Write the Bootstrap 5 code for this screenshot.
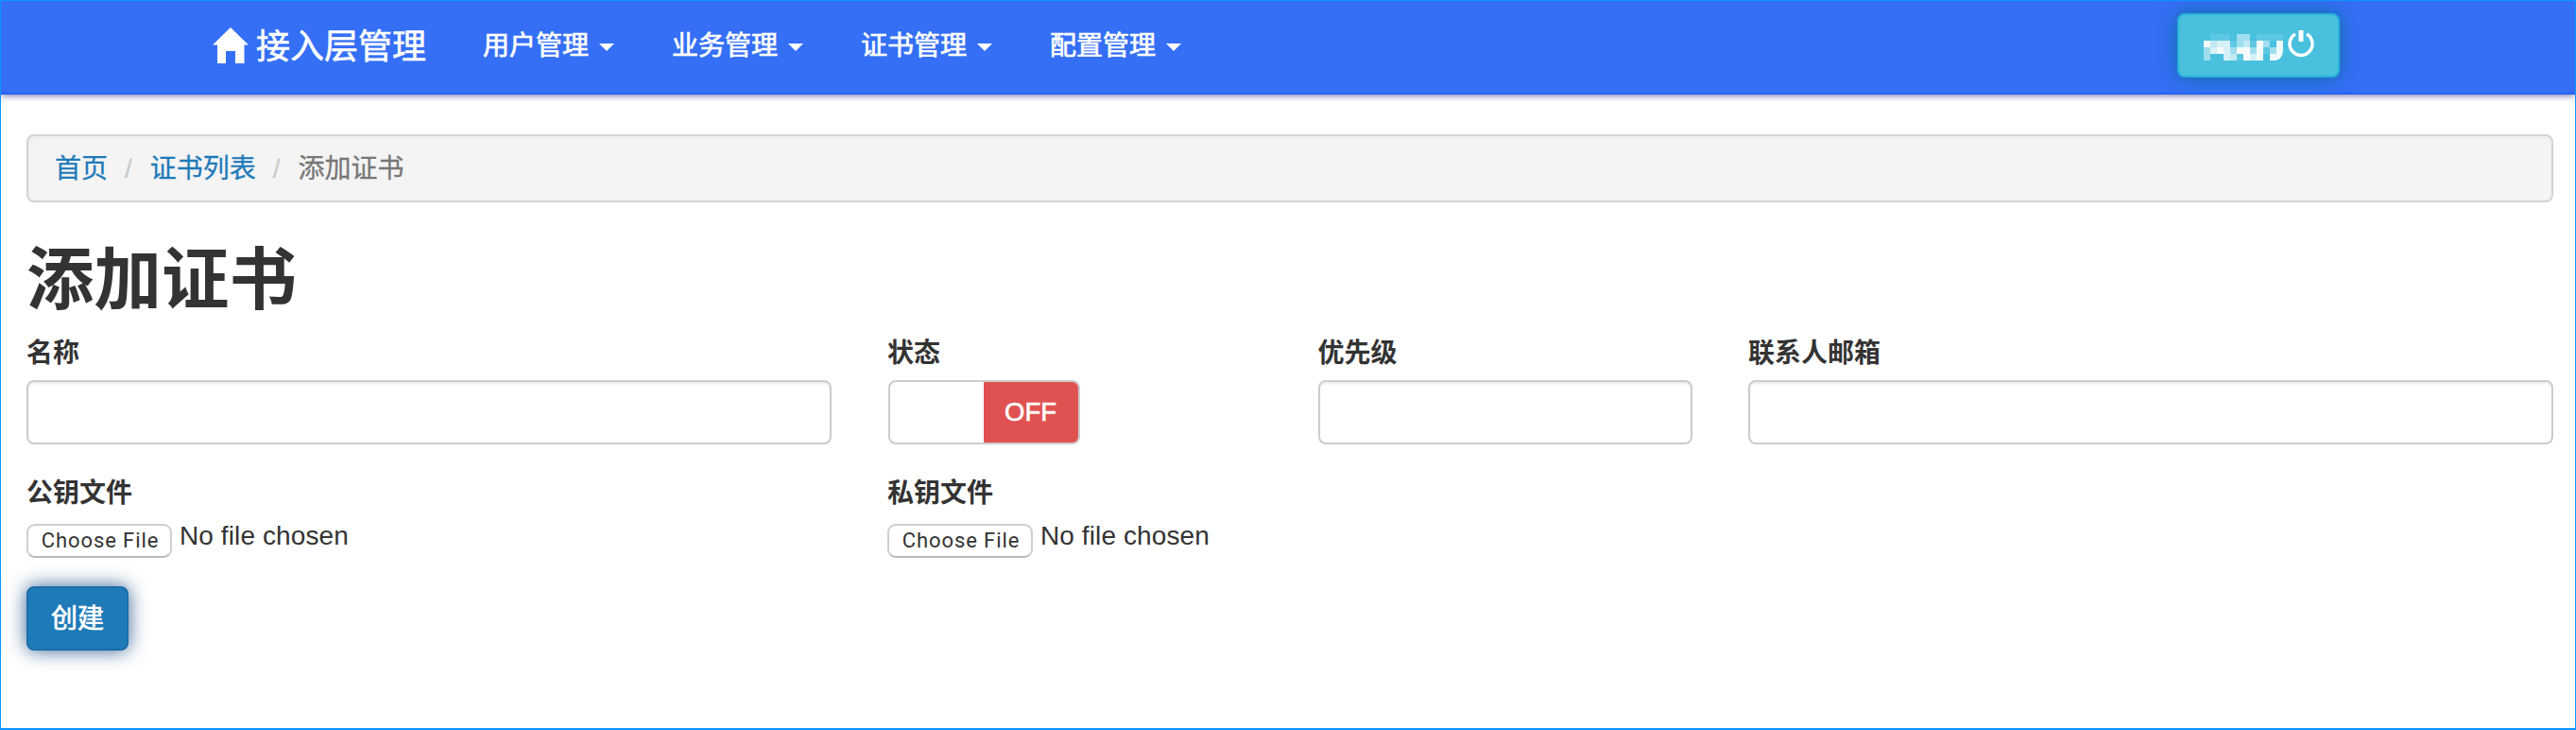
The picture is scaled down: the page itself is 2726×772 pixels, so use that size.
<!DOCTYPE html>
<html lang="zh-CN">
<head>
<meta charset="utf-8">
<meta name="viewport" content="width=device-width, initial-scale=1">
<title>添加证书</title>
<link href="https://cdn.jsdelivr.net/npm/bootstrap@5.3.0/dist/css/bootstrap.min.css" rel="stylesheet">
<style>
body{font-family:"Liberation Sans","Noto Sans CJK SC",sans-serif;font-size:28px;line-height:40px;color:#333;background:#fff}
.page-frame{height:772px;border:1px solid #0c93ff;border-bottom-width:2px;overflow:hidden}
.top-nav{height:99px;padding:0 0 0 224px;background:#346ff6;border-bottom:2px solid #2166f5;box-shadow:0 2px 6px rgba(0,0,110,.45);align-items:flex-start}
.top-nav .navbar-brand{font-size:36px;line-height:40px;color:#fff;padding:0;margin:29px 0 0;gap:8px;font-weight:400;-webkit-text-stroke:.6px #fff}
.brand-icon{margin-top:-5px}
.top-nav .navbar-nav{margin:28px 0 0 52px;gap:60px}
.top-nav .nav-link{color:#fff;padding:0;width:140px;line-height:40px;-webkit-text-stroke:.7px #fff;white-space:nowrap}
.top-nav .dropdown-toggle::after{border-width:8px 8px 0;margin-left:11px;vertical-align:4px}
.user-btn{width:172px;height:68px;margin:13px 249px 0 auto;padding:0 0 0 26px;background:#48c0de;border:2px solid #28b2da;border-radius:8px;box-shadow:0 0 20px rgba(0,110,130,.75)}
.user-btn:hover{background:#48c0de}
.crumbs{height:72px;margin:0;padding:2px 28px 0;background:#f4f4f4;border:2px solid #d3d3d3;border-radius:8px;box-shadow:inset 0 2px 3px rgba(0,0,0,.04);align-items:center;font-size:28px}
.crumbs .breadcrumb-item{color:#777;padding:0;line-height:40px}
.crumbs a{color:#1f7ab8;text-decoration:none}
.crumbs .breadcrumb-item,.crumbs a{-webkit-text-stroke:.3px}
.crumbs .breadcrumb-item+.breadcrumb-item::before{color:#ccc;padding:0 19px 0 18px}
.main-area{padding:42px 23px 0 27px}
.main-area h1{font-size:71.500px;line-height:80px;font-weight:700;margin:42px 0 18px}
.form-grid{--bs-gutter-x:59px}
.file-row{margin-top:32px}
.form-grid .form-label{display:block;font-weight:700;line-height:40px;margin:0 0 8px}
.form-grid .form-control{height:68px;border:2px solid #ccc;border-radius:8px;box-shadow:inset 0 2px 3px rgba(0,0,0,.075)}
.switch-box{width:203px;height:68px;margin-left:.5px;border:2px solid #ccc;border-radius:8px;overflow:hidden}
.switch-off{width:100px;background:#e05252;color:#fff;font-size:27.500px;-webkit-text-stroke:.6px #fff}
.file-btn{width:154px;height:36px;padding:0 0 0 2px;border:2px solid #cfcfcf;border-bottom-color:#b9b9b9;border-radius:9px;background:#fff;color:#333;font:22px/32px Roboto,sans-serif;letter-spacing:.9px;margin-top:4px}
.file-note{margin:-3px 0 0 8px;letter-spacing:.1px}
.create-btn{width:108px;height:68px;margin-top:30px;padding:2px 0 0;font-size:28px;line-height:40px;color:#fff;-webkit-text-stroke:.7px #fff;background:#1f7ab8;border:2px solid #1b6ea8;border-radius:8px;box-shadow:0 0 20px rgba(0,60,120,.8)}
</style>
</head>
<body>
<div class="page-frame">
<nav class="navbar navbar-expand top-nav">
  <a class="navbar-brand d-flex align-items-center" href="#">
    <svg class="brand-icon" width="38" height="38" viewBox="0 0 38 38" fill="#fff"><path d="M19 0 38 18.500h-4.500V38H24V25h-10v13H5V18.500H0z"/></svg>
    <span>接入层管理</span>
  </a>
  <ul class="navbar-nav">
    <li class="nav-item dropdown"><a class="nav-link dropdown-toggle" href="#" data-bs-toggle="dropdown">用户管理</a></li>
    <li class="nav-item dropdown"><a class="nav-link dropdown-toggle" href="#" data-bs-toggle="dropdown">业务管理</a></li>
    <li class="nav-item dropdown"><a class="nav-link dropdown-toggle" href="#" data-bs-toggle="dropdown">证书管理</a></li>
    <li class="nav-item dropdown"><a class="nav-link dropdown-toggle" href="#" data-bs-toggle="dropdown">配置管理</a></li>
  </ul>
  <button class="btn user-btn d-flex" type="button" aria-label="退出">
    <svg class="mt-3" width="120" height="36" viewBox="0 0 120 36" fill="#fff">
      <g shape-rendering="crispEdges">
        <path opacity=".12" d="M7 4h21v7H7zM56 4h28v7H56zM28 11h7v7h-7zM49 11h7v7h-7zM63 18h7v7h-7zM35 25h7v7h-7z"/>
        <path opacity=".48" d="M35 4h14v7H35zM0 18h7v14H0zM35 11h7v7h-7zM63 11h7v7h-7zM28 18h7v7h-7zM49 18h7v7h-7zM70 18h7v7h-7z"/>
        <path opacity=".65" d="M7 11h7v7H7zM42 11h7v7h-7zM28 25h7v7h-7z"/>
        <path opacity=".78" d="M14 11h14v7H14zM7 18h7v7H7zM21 18h7v14h-7zM49 25h7v7h-7z"/>
        <path opacity=".95" d="M0 11h7v7H0zM14 18h7v7h-7zM35 18h14v7H35zM56 11h7v21h-7zM42 25h7v7h-7z"/>
      </g>
      <path opacity=".9" d="M77 11h7v11q-1 9-8 10h-6v-7h7z"/>
      <path d="M97 4A12 12 0 1 0 109 4" fill="none" stroke="#fff" stroke-width="3.500"/>
      <path d="M103 0V12" stroke="#fff" stroke-width="5"/>
    </svg>
  </button>
</nav>
<main class="main-area">
  <ol class="breadcrumb crumbs">
    <li class="breadcrumb-item"><a href="#">首页</a></li>
    <li class="breadcrumb-item"><a href="#">证书列表</a></li>
    <li class="breadcrumb-item active">添加证书</li>
  </ol>
  <h1>添加证书</h1>
  <form>
    <div class="row form-grid">
      <div class="col-4"><label class="form-label" for="name">名称</label><input id="name" class="form-control"></div>
      <div class="col-2"><label class="form-label">状态</label>
        <div class="switch-box d-flex justify-content-end"><span class="switch-off d-flex align-items-center justify-content-center">OFF</span></div></div>
      <div class="col-2"><label class="form-label" for="priority">优先级</label><input id="priority" class="form-control"></div>
      <div class="col-4"><label class="form-label" for="mail">联系人邮箱</label><input id="mail" class="form-control"></div>
    </div>
    <div class="row form-grid file-row">
      <div class="col-4"><label class="form-label">公钥文件</label>
        <div class="d-flex align-items-start"><button class="file-btn" type="button">Choose File</button><span class="file-note">No file chosen</span></div></div>
      <div class="col-4"><label class="form-label">私钥文件</label>
        <div class="d-flex align-items-start"><button class="file-btn" type="button">Choose File</button><span class="file-note">No file chosen</span></div></div>
    </div>
    <button class="btn create-btn" type="button">创建</button>
  </form>
</main>
</div>
<script src="https://cdn.jsdelivr.net/npm/bootstrap@5.3.0/dist/js/bootstrap.bundle.min.js"></script>
</body>
</html>
